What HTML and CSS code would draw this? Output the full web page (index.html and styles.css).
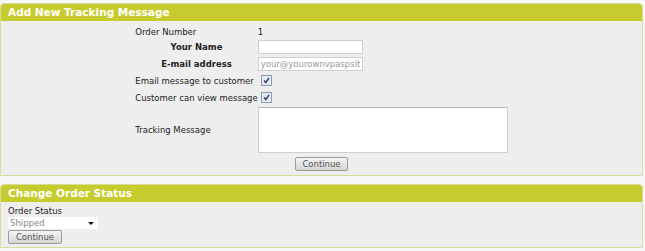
FILE: index.html
```html
<!DOCTYPE html>
<html lang="en">
<head>
    <meta charset="UTF-8">
    <title>Tracking Message</title>
    <link rel="stylesheet" href="styles.css">
</head>
<body>

    <div class="panel">
        <div class="panel-head">Add New Tracking Message</div>
        <div class="panel-body">
            <table class="track-form">
                <tr class="row-sm">
                    <td class="lbl">Order Number</td>
                    <td>1</td>
                </tr>
                <tr>
                    <th>Your Name</th>
                    <td><input type="text" class="field"></td>
                </tr>
                <tr>
                    <th>E-mail address</th>
                    <td><input type="text" class="field" value="your@yourownvpaspsite.com"></td>
                </tr>
                <tr>
                    <td class="lbl">Email message to customer</td>
                    <td><span class="check"><svg width="9" height="9" viewBox="0 0 9 9"><path d="M2 4.5 L3.8 6.5 L7 1.8" fill="none" stroke="#2a3f7a" stroke-width="1.4"/></svg></span></td>
                </tr>
                <tr>
                    <td class="lbl">Customer can view message</td>
                    <td><span class="check"><svg width="9" height="9" viewBox="0 0 9 9"><path d="M2 4.5 L3.8 6.5 L7 1.8" fill="none" stroke="#2a3f7a" stroke-width="1.4"/></svg></span></td>
                </tr>
                <tr class="row-msg">
                    <td class="lbl">Tracking Message</td>
                    <td><textarea class="msg"></textarea></td>
                </tr>
                <tr>
                    <td colspan="2" class="center"><button class="btn">Continue</button></td>
                </tr>
            </table>
        </div>
    </div>

    <div class="panel second">
        <div class="panel-head">Change Order Status</div>
        <div class="panel-body status">
            <div>Order Status</div>
            <div class="select"><span>Shipped</span><i class="arrow"></i></div>
            <button class="btn">Continue</button>
        </div>
    </div>

</body>
</html>
```

FILE: styles.css
```css
body {
    margin: 0;
    padding-top: 3px;
    background-color: #f7f7f5;
    font-family: "DejaVu Sans", Verdana, sans-serif;
    font-size: 8.5px;
    color: #222;
}
.panel {
    width: 641px;
    border: 1px solid #d8dd9a;
    border-radius: 4px 4px 0 0;
    background: #eeeeee;
}
.second {
    margin-top: 8px;
}
.panel-head {
    height: 17px;
    line-height: 17px;
    padding-left: 7px;
    background: #c6cc2d;
    border-radius: 3px 3px 0 0;
    color: #fff;
    font-weight: bold;
    font-size: 10.5px;
}
.panel-body {
    padding: 5px 0 4px;
}
/* formulier */
.track-form {
    margin: 0 auto;
    border-collapse: collapse;
    width: 372px;
}
.track-form td,
.track-form th {
    padding: 0;
    height: 17px;
    white-space: nowrap;
}
.track-form th {
    text-align: center;
    font-weight: bold;
    width: 123px;
}
.track-form .lbl {
    text-align: left;
}
.row-sm td {
    height: 12px;
}
.row-msg td {
    height: 48px;
}
.center {
    text-align: center;
}
.field {
    box-sizing: border-box;
    width: 105px;
    height: 14px;
    margin: 0;
    padding: 0 2px;
    border: 1px solid #cfcfcf;
    background: #fff;
    font-family: inherit;
    font-size: 8.5px;
    color: #999;
}
.check {
    display: inline-block;
    box-sizing: border-box;
    width: 11px;
    height: 11px;
    margin-left: 3px;
    border: 1px solid #8b9cb8;
    background: #e6e9f0;
    vertical-align: middle;
}
.check svg {
    display: block;
}
.msg {
    box-sizing: border-box;
    display: block;
    width: 250px;
    height: 46px;
    margin: 0;
    border: 1px solid #cfcfcf;
    border-top-color: #b5b5b5;
    background: #fff;
    resize: none;
}
.btn {
    box-sizing: border-box;
    height: 14px;
    padding: 0 6px;
    margin: 2px 0 0;
    border: 1px solid #9a9a9a;
    border-radius: 2px;
    background: linear-gradient(#f4f4f4, #d6d6d6);
    font-family: inherit;
    font-size: 8.5px;
    line-height: 12px;
    color: #555;
}
.status {
    padding: 4px 7px 3px;
    line-height: 11px;
}
.status .btn {
    margin-top: 1px;
    width: 54px;
}
.select {
    position: relative;
    width: 90px;
    height: 12px;
    line-height: 12px;
    padding-left: 2px;
    box-sizing: border-box;
    background: #fff;
    color: #888;
}
.arrow {
    position: absolute;
    right: 4px;
    top: 5px;
    border-left: 3px solid transparent;
    border-right: 3px solid transparent;
    border-top: 3px solid #111;
}
```
